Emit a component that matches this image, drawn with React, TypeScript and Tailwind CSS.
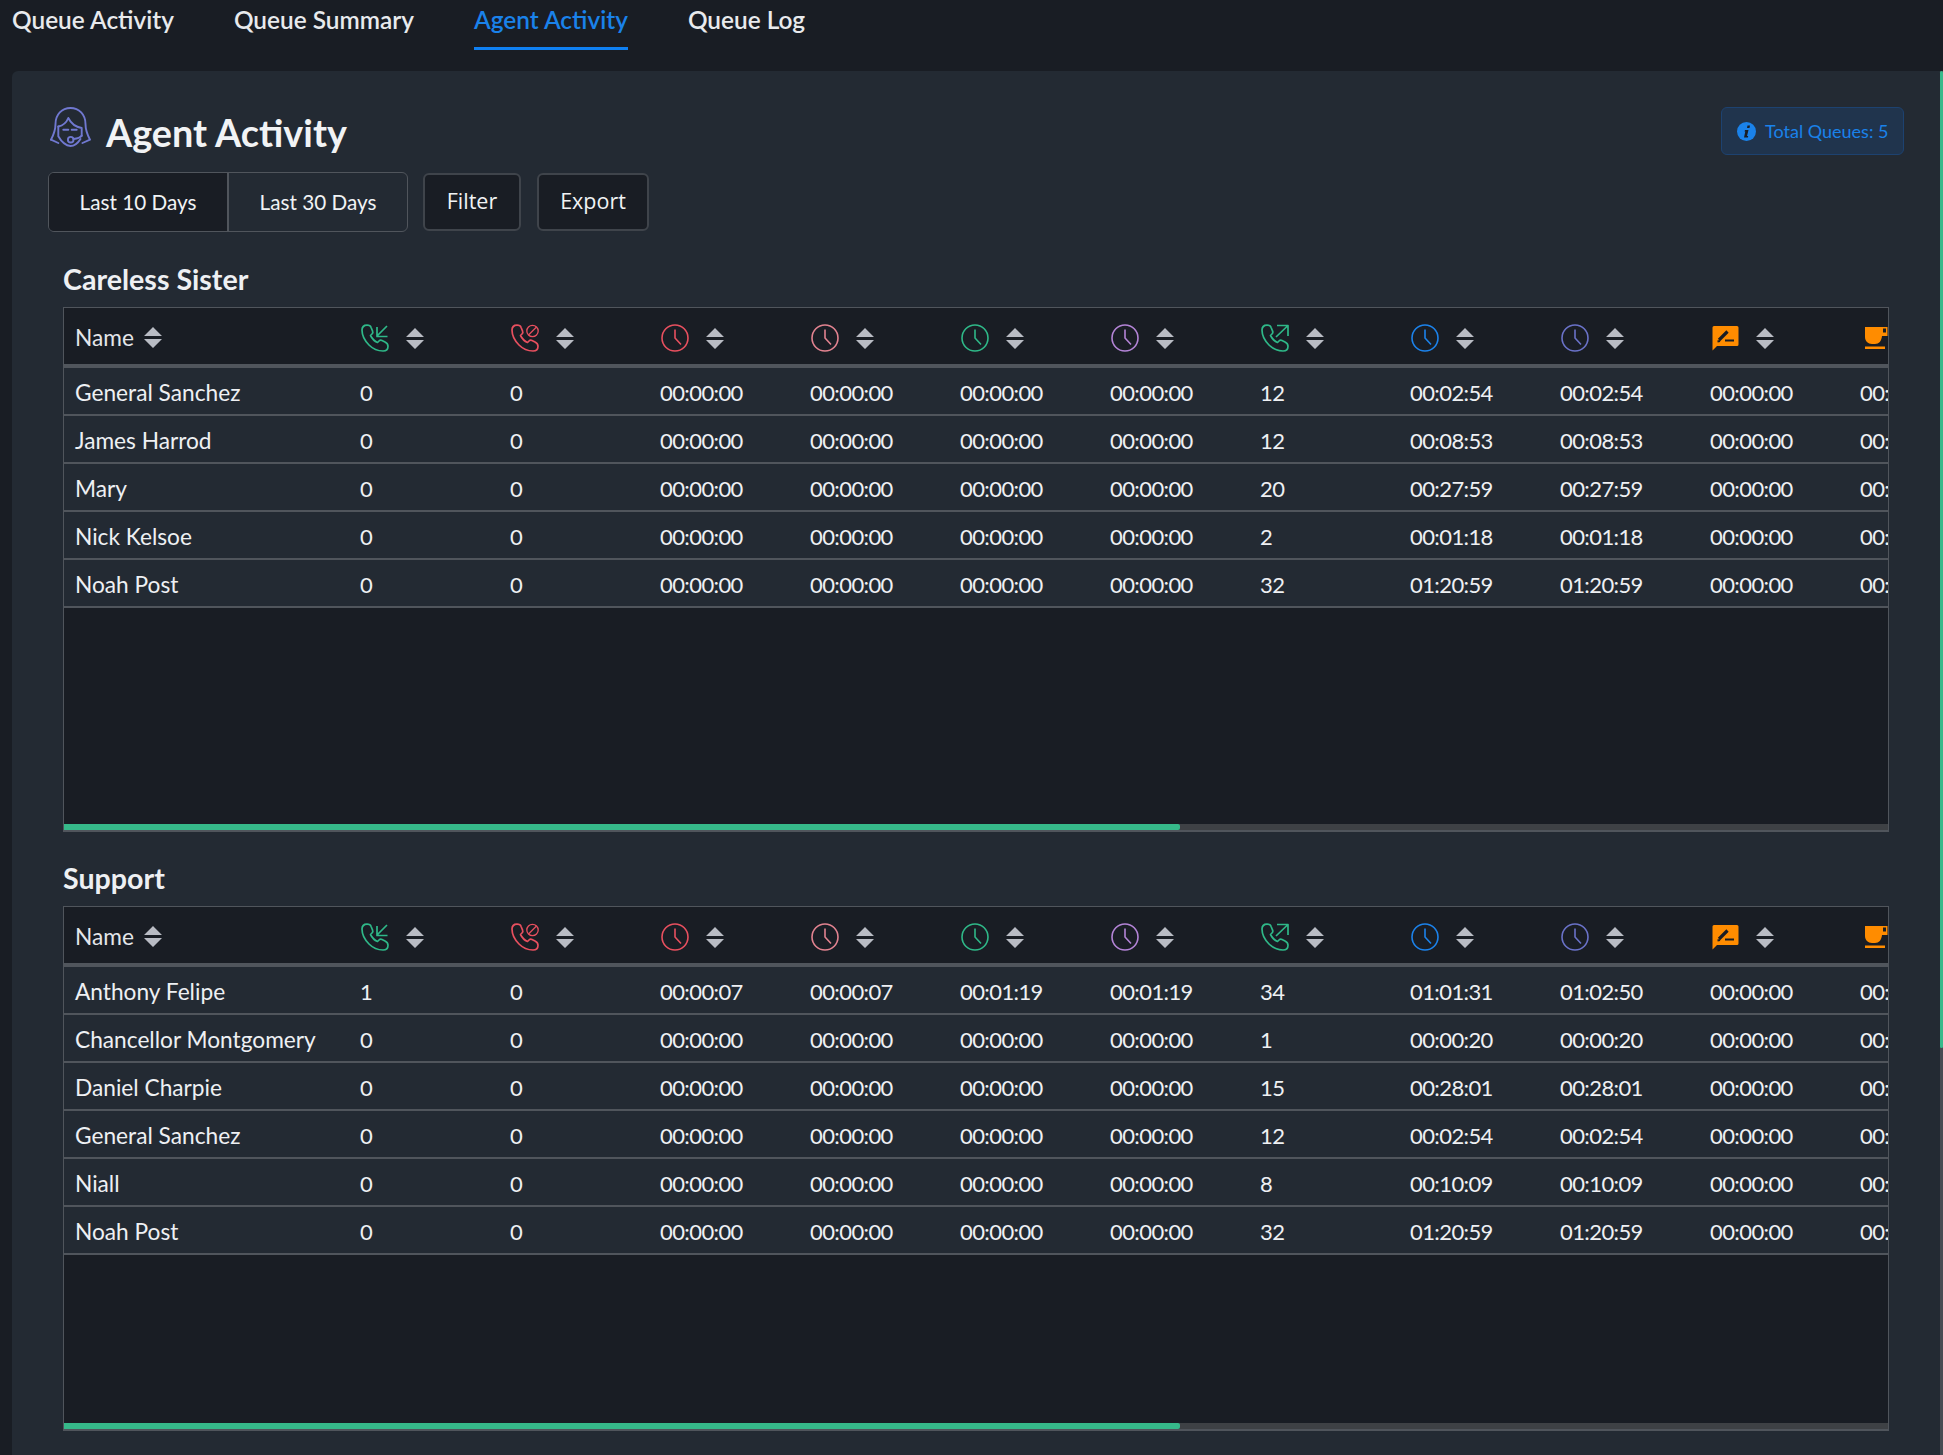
import React from 'react';

const Z = '00:00:00';

type Row = [string, number, string, string, string, string, number, string, string];

const CARELESS: Row[] = [
  ['General Sanchez', 0, Z, Z, Z, Z, 12, '00:02:54', '00:02:54'],
  ['James Harrod', 0, Z, Z, Z, Z, 12, '00:08:53', '00:08:53'],
  ['Mary', 0, Z, Z, Z, Z, 20, '00:27:59', '00:27:59'],
  ['Nick Kelsoe', 0, Z, Z, Z, Z, 2, '00:01:18', '00:01:18'],
  ['Noah Post', 0, Z, Z, Z, Z, 32, '01:20:59', '01:20:59'],
];

const SUPPORT: Row[] = [
  ['Anthony Felipe', 1, '00:00:07', '00:00:07', '00:01:19', '00:01:19', 34, '01:01:31', '01:02:50'],
  ['Chancellor Montgomery', 0, Z, Z, Z, Z, 1, '00:00:20', '00:00:20'],
  ['Daniel Charpie', 0, Z, Z, Z, Z, 15, '00:28:01', '00:28:01'],
  ['General Sanchez', 0, Z, Z, Z, Z, 12, '00:02:54', '00:02:54'],
  ['Niall', 0, Z, Z, Z, Z, 8, '00:10:09', '00:10:09'],
  ['Noah Post', 0, Z, Z, Z, Z, 32, '01:20:59', '01:20:59'],
];

const HANDSET =
  'M6 1.2C3 1.2 1 3.2 1 6c0 6 3 11 7 15s9 6 14 6c3 0 5-2 5-4.800 0-2-1-3.200-3-4.200l-3-1.500c-1-.5-2-.5-3 .5l-1.500 1.500c-3.500-1.500-5.500-4-7-7l1.500-1.500c1-1 1-2 .5-3L10 3.200C9.500 1.700 8 1.200 6 1.200z';

const PhoneIn = () => (
  <svg width="28" height="28" viewBox="0 0 28 28" fill="none" stroke="#2fb888" strokeWidth="1.7" strokeLinejoin="round">
    <path d={HANDSET} />
    <path d="M26 2 16 12M16 3v9.500h10.500" />
  </svg>
);

const PhoneMissed = () => (
  <svg width="28" height="28" viewBox="0 0 28 28" fill="none" stroke="#e8505f" strokeWidth="1.7" strokeLinejoin="round">
    <path d={HANDSET} />
    <circle cx="21.500" cy="7" r="5.700" strokeWidth="1.300" />
    <path d="M17.500 11 25.500 3" strokeWidth="1.300" />
  </svg>
);

const PhoneOut = () => (
  <svg width="28" height="28" viewBox="0 0 28 28" fill="none" stroke="#2fb888" strokeWidth="1.700" strokeLinejoin="round">
    <path d={HANDSET} />
    <path d="M15 13 27 1.500M16 1.500h11V12" />
  </svg>
);

const Clock = ({ color }: { color: string }) => (
  <svg width="28" height="28" viewBox="0 0 28 28" fill="none" stroke={color} strokeWidth="1.600">
    <circle cx="14" cy="14" r="13" />
    <path d="M14 5.500V14l6 6.500" />
  </svg>
);

const NoteEdit = () => (
  <svg width="28" height="28" viewBox="0 0 28 28">
    <path fill="#ff8c00" d="M3 2h23a1.500 1.500 0 0 1 1.500 1.500v17a1.500 1.500 0 0 1-1.500 1.500H6l-4.500 4.500V3.500A1.500 1.500 0 0 1 3 2z" />
    <path fill="none" stroke="#191d24" strokeWidth="3.200" d="M8 16 16.500 7.500" />
    <path fill="none" stroke="#191d24" strokeWidth="2" d="M14 16.500h9M6.500 17.500l2.500-.5" />
  </svg>
);

const Cup = () => (
  <svg width="28" height="28" viewBox="0 0 28 28">
    <path fill="#ff8c00" d="M4 3h22.500v9H21c-.5 5-3 8-7 8h-3c-4 0-7-3-7-7z" />
    <rect x="22" y="4.500" width="3" height="4" fill="#191d24" />
    <rect x="4" y="22.500" width="20" height="2.500" fill="#ff8c00" />
  </svg>
);

const SortIcon = () => (
  <svg width="18" height="21" viewBox="0 0 18 21" fill="#b9bcc4" className="shrink-0">
    <path d="M9 0 18 9H0zM0 12h18l-9 9z" />
  </svg>
);

const AgentIcon = () => (
  <svg width="41" height="40" viewBox="0 0 41 40" fill="none" stroke="#7078d0" strokeWidth="1.900" strokeLinejoin="round" strokeLinecap="round">
    <path d="M1 32.700C3.500 28 5.500 24 5.500 17 5.500 7.500 12 1 20.500 1S35.500 7.500 35.500 17c0 7 2 11 4.500 15.700L32.500 36" />
    <path d="M1 32.700 8.300 36" />
    <path d="M8.300 19.500C13 18.500 16.500 15.500 18.300 11c2.500 5 7.500 9 13.400 10v8" />
    <path d="M8.300 19.500v9.800C11 34 15 38.700 20.500 39c3.500 0 7.500-3 10-7" />
    <path d="M13.300 22.700h5M21.700 22.700h5" />
    <circle cx="20.700" cy="32.700" r="2.800" />
    <path d="M23.500 32c4-.5 7-1.500 8.200-3.500" />
  </svg>
);

const COLUMN_ICONS = [
  <PhoneIn />,
  <PhoneMissed />,
  <Clock color="#e8505f" />,
  <Clock color="#e28390" />,
  <Clock color="#2fb888" />,
  <Clock color="#b384d6" />,
  <PhoneOut />,
  <Clock color="#1c82ea" />,
  <Clock color="#6a72c8" />,
  <NoteEdit />,
];

// the digits in the screenshot run narrower than the installed Lato
const NUM = 'border-b-2 border-[#50555c] pt-[3px] pr-3 pl-[11px] text-[22px] tracking-[-0.6px]';

const QueueTable = ({ title, rows }: { title: string; rows: Row[] }) => (
  <section className="mb-[23px]">
    <h2 className="mb-[4px] text-[28.600px] leading-[47px] font-bold text-[#eef0f3]">{title}</h2>
    <div className="flex h-[525px] flex-col border border-b-2 border-[#50555c] bg-[#191d24]">
      <div className="flex-1 overflow-hidden">
        <table className="w-[2985px] table-fixed border-separate border-spacing-0 text-[22.700px] text-[#eef0f3]">
          <colgroup>
            <col className="w-[285px]" />
            {Array.from({ length: 18 }).map((_, i) => (
              <col key={i} className="w-[150px]" />
            ))}
          </colgroup>
          <thead>
            <tr>
              <th className="h-[60px] border-b-[4px] border-[#50555c] px-[11px] pt-[4px] text-left font-normal">
                <span className="flex items-center gap-[10px] text-[#e4e6ea]">
                  Name
                  <SortIcon />
                </span>
              </th>
              {COLUMN_ICONS.map((icon, i) => (
                <th key={i} className="h-[60px] border-b-[4px] border-[#50555c] px-3 pt-[4px] text-left">
                  <span className="flex items-center gap-[17px]">
                    {icon}
                    <SortIcon />
                  </span>
                </th>
              ))}
              <th className="h-[60px] border-b-[4px] border-[#50555c] pt-[4px] pl-[12px] text-left">
                <Cup />
              </th>
            </tr>
          </thead>
          <tbody className="bg-[#232a33]">
            {rows.map((row) => (
              <tr key={row[0]}>
                <td className="h-[48px] border-b-2 border-[#50555c] px-[11px] pt-[5px]">{row[0]}</td>
                <td className={NUM}>{row[1]}</td>
                <td className={NUM}>0</td>
                <td className={NUM}>{row[2]}</td>
                <td className={NUM}>{row[3]}</td>
                <td className={NUM}>{row[4]}</td>
                <td className={NUM}>{row[5]}</td>
                <td className={NUM}>{row[6]}</td>
                <td className={NUM}>{row[7]}</td>
                <td className={NUM}>{row[8]}</td>
                <td className={NUM}>{Z}</td>
                <td className={NUM}>{Z}</td>
              </tr>
            ))}
          </tbody>
        </table>
      </div>
      <div className="h-[6px] shrink-0 bg-[#3e4145]">
        <div className="h-full w-[61.2%] rounded-r-[2px] bg-[#36b98a]" />
      </div>
    </div>
  </section>
);

export default function App() {
  return (
    <div className="h-screen overflow-hidden bg-[#191d24] [font-family:Lato,sans-serif]">
      <nav className="flex h-[71px] gap-[60px] pl-3">
        {['Queue Activity', 'Queue Summary', 'Agent Activity', 'Queue Log'].map((tab) => (
          <a
            key={tab}
            className={
              tab === 'Agent Activity'
                ? 'h-[50px] border-b-[3px] border-[#0f80f2] pt-[2px] text-[24.400px] leading-[36px] font-semibold text-[#1a82ea]'
                : 'h-[50px] pt-[2px] text-[24.400px] leading-[36px] font-semibold text-[#e8eaed]'
            }
          >
            {tab}
          </a>
        ))}
      </nav>

      <main className="relative ml-3 h-[1384px] rounded-tl-md bg-[#232a33] pt-[36px] pr-[39px] pl-[36px]">
        <div className="absolute top-0 right-0 h-full w-[3px] bg-[#474b52]">
          <div className="h-[977px] rounded-sm bg-[#36b98a]" />
        </div>

        <div className="flex items-start justify-between">
          <div className="flex h-[65px] items-start gap-[15px] pl-[2px]">
            <AgentIcon />
            <h1 className="text-[37.800px] leading-[52px] font-bold text-[#f1f3f5]">Agent Activity</h1>
          </div>
          <div className="flex h-[48px] w-[183px] items-center gap-[9px] rounded-md border border-[#1d4270] bg-[#20344d] pl-[15px] text-[18px] text-[#1a82ea]">
            <svg width="19" height="19" viewBox="0 0 19 19" className="shrink-0">
              <circle cx="9.500" cy="9.500" r="9.500" fill="#1a82ea" />
              <path fill="#191d24" d="M10.500 3.500h2.500l-.5 2.500H10zM8 8h3.500l-1.500 6h1.200l-.3 1.500H7l1.300-6H7.500z" />
            </svg>
            Total Queues: 5
          </div>
        </div>

        <div className="mb-[24px] flex items-center text-[#f1f3f5]">
          <div className="flex h-[60px] overflow-hidden rounded-md border border-[#50555c] pt-[2px] text-[20.700px]">
            <button className="-mt-[2px] w-[178px] bg-[#191d24] pt-[2px]">Last 10 Days</button>
            <button className="-mt-[2px] w-[180px] border-l-2 border-[#50555c] pt-[2px]">Last 30 Days</button>
          </div>
          <button className="ml-[15px] h-[58px] w-[98px] rounded-md border-2 border-[#3f444b] bg-[#191d24] pb-[2px] text-[21.500px] [font-family:'Open_Sans',sans-serif]">
            Filter
          </button>
          <button className="ml-4 h-[58px] w-[112px] rounded-md border-2 border-[#3f444b] bg-[#191d24] pb-[2px] text-[21.500px] [font-family:'Open_Sans',sans-serif]">
            Export
          </button>
        </div>

        <div className="px-[15px]">
          <QueueTable title="Careless Sister" rows={CARELESS} />
          <QueueTable title="Support" rows={SUPPORT} />
        </div>
      </main>
    </div>
  );
}
